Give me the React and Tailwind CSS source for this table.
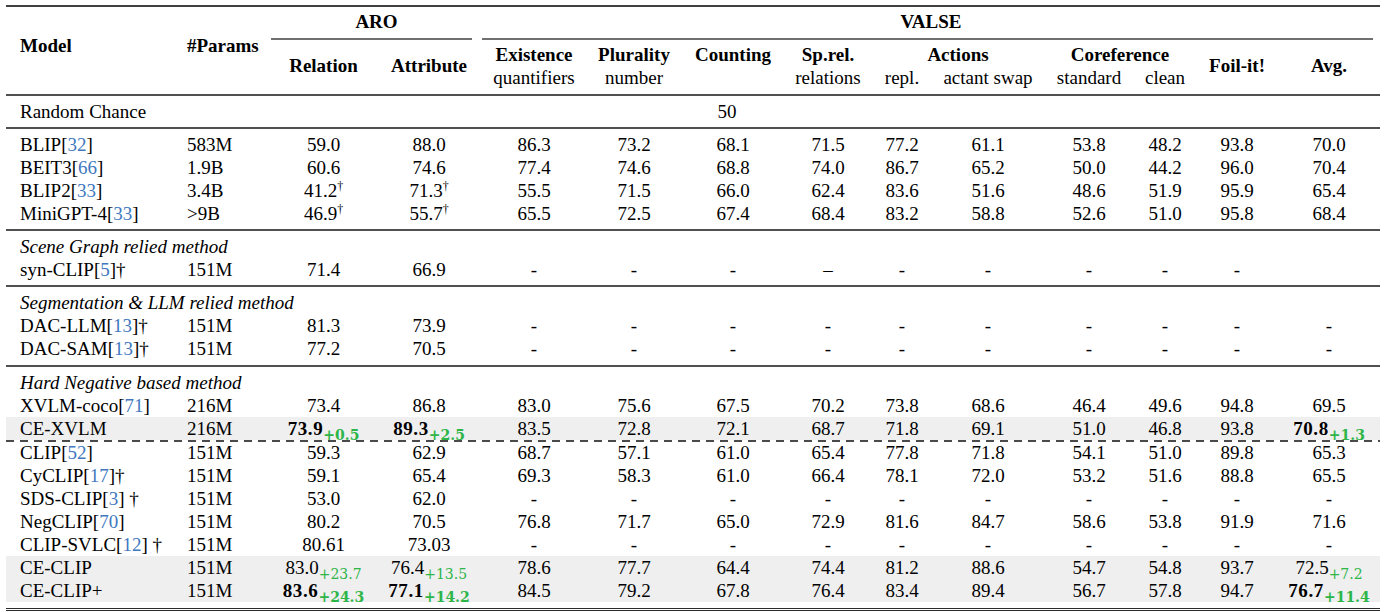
import React from "react";

const COLS =
  "grid grid-cols-[172px_93px_105px_106px_104px_96px_102px_88px_60px_112px_90px_62px_82px_102px]";

const D = "-";
const dashes = [D, D, D, D, D, D, D, D, D, D];

// each row: model name, citation, dagger, params, then 12 score cells
const groups = [
  {
    rows: [
      { name: "BLIP", cite: "32", params: "583M", vals: ["59.0", "88.0", "86.3", "73.2", "68.1", "71.5", "77.2", "61.1", "53.8", "48.2", "93.8", "70.0"] },
      { name: "BEIT3", cite: "66", params: "1.9B", vals: ["60.6", "74.6", "77.4", "74.6", "68.8", "74.0", "86.7", "65.2", "50.0", "44.2", "96.0", "70.4"] },
      { name: "BLIP2", cite: "33", params: "3.4B", vals: [{ v: "41.2", sup: true }, { v: "71.3", sup: true }, "55.5", "71.5", "66.0", "62.4", "83.6", "51.6", "48.6", "51.9", "95.9", "65.4"] },
      { name: "MiniGPT-4", cite: "33", params: ">9B", vals: [{ v: "46.9", sup: true }, { v: "55.7", sup: true }, "65.5", "72.5", "67.4", "68.4", "83.2", "58.8", "52.6", "51.0", "95.8", "68.4"] },
    ],
  },
  {
    title: "Scene Graph relied method",
    rows: [
      { name: "syn-CLIP", cite: "5", dag: "†", params: "151M", vals: ["71.4", "66.9", D, D, D, "–", D, D, D, D, D, ""] },
    ],
  },
  {
    title: "Segmentation & LLM relied method",
    rows: [
      { name: "DAC-LLM", cite: "13", dag: "†", params: "151M", vals: ["81.3", "73.9", ...dashes] },
      { name: "DAC-SAM", cite: "13", dag: "†", params: "151M", vals: ["77.2", "70.5", ...dashes] },
    ],
  },
  {
    title: "Hard Negative based method",
    last: true,
    rows: [
      { name: "XVLM-coco", cite: "71", params: "216M", vals: ["73.4", "86.8", "83.0", "75.6", "67.5", "70.2", "73.8", "68.6", "46.4", "49.6", "94.8", "69.5"] },
      { name: "CE-XVLM", params: "216M", gray: true, dashedAfter: true, vals: [{ v: "73.9", b: true, d: "+0.5" }, { v: "89.3", b: true, d: "+2.5" }, "83.5", "72.8", "72.1", "68.7", "71.8", "69.1", "51.0", "46.8", "93.8", { v: "70.8", b: true, d: "+1.3" }] },
      { name: "CLIP", cite: "52", params: "151M", vals: ["59.3", "62.9", "68.7", "57.1", "61.0", "65.4", "77.8", "71.8", "54.1", "51.0", "89.8", "65.3"] },
      { name: "CyCLIP", cite: "17", dag: "†", params: "151M", vals: ["59.1", "65.4", "69.3", "58.3", "61.0", "66.4", "78.1", "72.0", "53.2", "51.6", "88.8", "65.5"] },
      { name: "SDS-CLIP", cite: "3", dag: " †", params: "151M", vals: ["53.0", "62.0", ...dashes] },
      { name: "NegCLIP", cite: "70", params: "151M", vals: ["80.2", "70.5", "76.8", "71.7", "65.0", "72.9", "81.6", "84.7", "58.6", "53.8", "91.9", "71.6"] },
      { name: "CLIP-SVLC", cite: "12", dag: " †", params: "151M", vals: ["80.61", "73.03", ...dashes] },
      { name: "CE-CLIP", params: "151M", gray: true, vals: [{ v: "83.0", d: "+23.7" }, { v: "76.4", d: "+13.5" }, "78.6", "77.7", "64.4", "74.4", "81.2", "88.6", "54.7", "54.8", "93.7", { v: "72.5", d: "+7.2" }] },
      { name: "CE-CLIP+", params: "151M", gray: true, vals: [{ v: "83.6", b: true, d: "+24.3" }, { v: "77.1", b: true, d: "+14.2" }, "84.5", "79.2", "67.8", "76.4", "83.4", "89.4", "56.7", "57.8", "94.7", { v: "76.7", b: true, d: "+11.4" }] },
    ],
  },
];

const Rule = () => <div className="h-[2px] bg-[#505050]" />;

const Score = ({ val }) => {
  if (typeof val === "string") return <span>{val}</span>;
  return (
    <span>
      <span className={val.b ? "font-bold tracking-[0.6px]" : ""}>{val.v}</span>
      {val.sup && <span className="relative -top-[7px] text-[12px] leading-[0]">†</span>}
      {val.d && (
        <span
          className={`relative top-[5px] font-['DejaVu_Serif'] text-[14px] leading-[0] text-[#2db548] ${
            val.b ? "font-bold" : ""
          }`}
        >
          {val.d}
        </span>
      )}
    </span>
  );
};

const Row = ({ row }) => (
  <>
    <div className={`${COLS} h-[23px] items-center ${row.gray ? "bg-[#efefef]" : ""}`}>
      <div className="pl-[14px]">
        {row.name}
        {row.cite && (
          <>
            [<span className="text-[#4178c0]">{row.cite}</span>]
          </>
        )}
        {row.dag && <span className="whitespace-pre">{row.dag}</span>}
      </div>
      <div className="pl-[9px]">{row.params}</div>
      {row.vals.map((v, i) => (
        <div key={i} className="text-center">
          <Score val={v} />
        </div>
      ))}
    </div>
    {row.dashedAfter && (
      <div className="relative h-[2px] -mb-px bg-[repeating-linear-gradient(to_right,#4a4a4a_0_8px,transparent_8px_14px)]" />
    )}
  </>
);

export default function App() {
  return (
    <div className="bg-white min-h-[612px] pt-[5px] font-['Liberation_Serif'] text-[19px] leading-[23px] text-black whitespace-nowrap">
      <div className="ml-[6px] w-[1374px]">
        <div className="h-[2px] bg-[#404040]" />

        {/* header */}
        <div className={`${COLS} grid-rows-[33px_54px] font-bold`}>
          <div className="col-start-1 row-start-1 row-span-2 pl-[14px] pt-[27px]">Model</div>
          <div className="col-start-2 row-start-1 row-span-2 pl-[9px] pt-[27px]">#Params</div>

          <div className="col-start-3 col-span-2 row-start-1 flex flex-col">
            <div className="pt-[3px] text-center">ARO</div>
            <div className="mt-[5px] mr-[10px] h-[2px] bg-[#707070]" />
          </div>
          <div className="col-start-5 col-span-10 row-start-1 flex flex-col">
            <div className="pt-[3px] text-center">VALSE</div>
            <div className="mt-[5px] mr-[7px] h-[2px] bg-[#707070]" />
          </div>

          <div className="col-start-3 row-start-2 pt-[14px] text-center">Relation</div>
          <div className="col-start-4 row-start-2 pt-[14px] text-center">Attribute</div>
          <div className="col-start-5 row-start-2 pt-[3px] text-center">
            <div>Existence</div>
            <div className="font-normal">quantifiers</div>
          </div>
          <div className="col-start-6 row-start-2 pt-[3px] text-center">
            <div>Plurality</div>
            <div className="font-normal">number</div>
          </div>
          <div className="col-start-7 row-start-2 pt-[3px] text-center">Counting</div>
          <div className="col-start-8 row-start-2 pt-[3px] text-center">
            <div>Sp.rel.</div>
            <div className="font-normal">relations</div>
          </div>
          <div className="col-start-9 col-span-2 row-start-2 pt-[3px]">
            <div className="text-center">Actions</div>
            <div className="grid grid-cols-[60px_112px] font-normal text-center">
              <div>repl.</div>
              <div>actant swap</div>
            </div>
          </div>
          <div className="col-start-11 col-span-2 row-start-2 pt-[3px]">
            <div className="text-center">Coreference</div>
            <div className="grid grid-cols-[90px_62px] font-normal text-center">
              <div>standard</div>
              <div>clean</div>
            </div>
          </div>
          <div className="col-start-13 row-start-2 pt-[14px] text-center">Foil-it!</div>
          <div className="col-start-14 row-start-2 pt-[14px] text-center">Avg.</div>
        </div>

        <Rule />

        {/* random chance */}
        <div className={`${COLS} py-[4px]`}>
          <div className="pl-[14px]">Random Chance</div>
          <div className="col-span-13 pr-[104px] text-center">50</div>
        </div>

        {groups.map((g, gi) => (
          <React.Fragment key={gi}>
            <Rule />
            <div className={g.last ? "pt-[4px]" : gi === 2 ? "pt-[4px] pb-[5px]" : "py-[4px]"}>
              {g.title && <div className="pl-[14px] italic">{g.title}</div>}
              {g.rows.map((r, ri) => (
                <Row key={ri} row={r} />
              ))}
            </div>
          </React.Fragment>
        ))}

        <div className="mt-[6px] h-[3px] border-y border-[#2a2a2a]" />
      </div>
    </div>
  );
}
